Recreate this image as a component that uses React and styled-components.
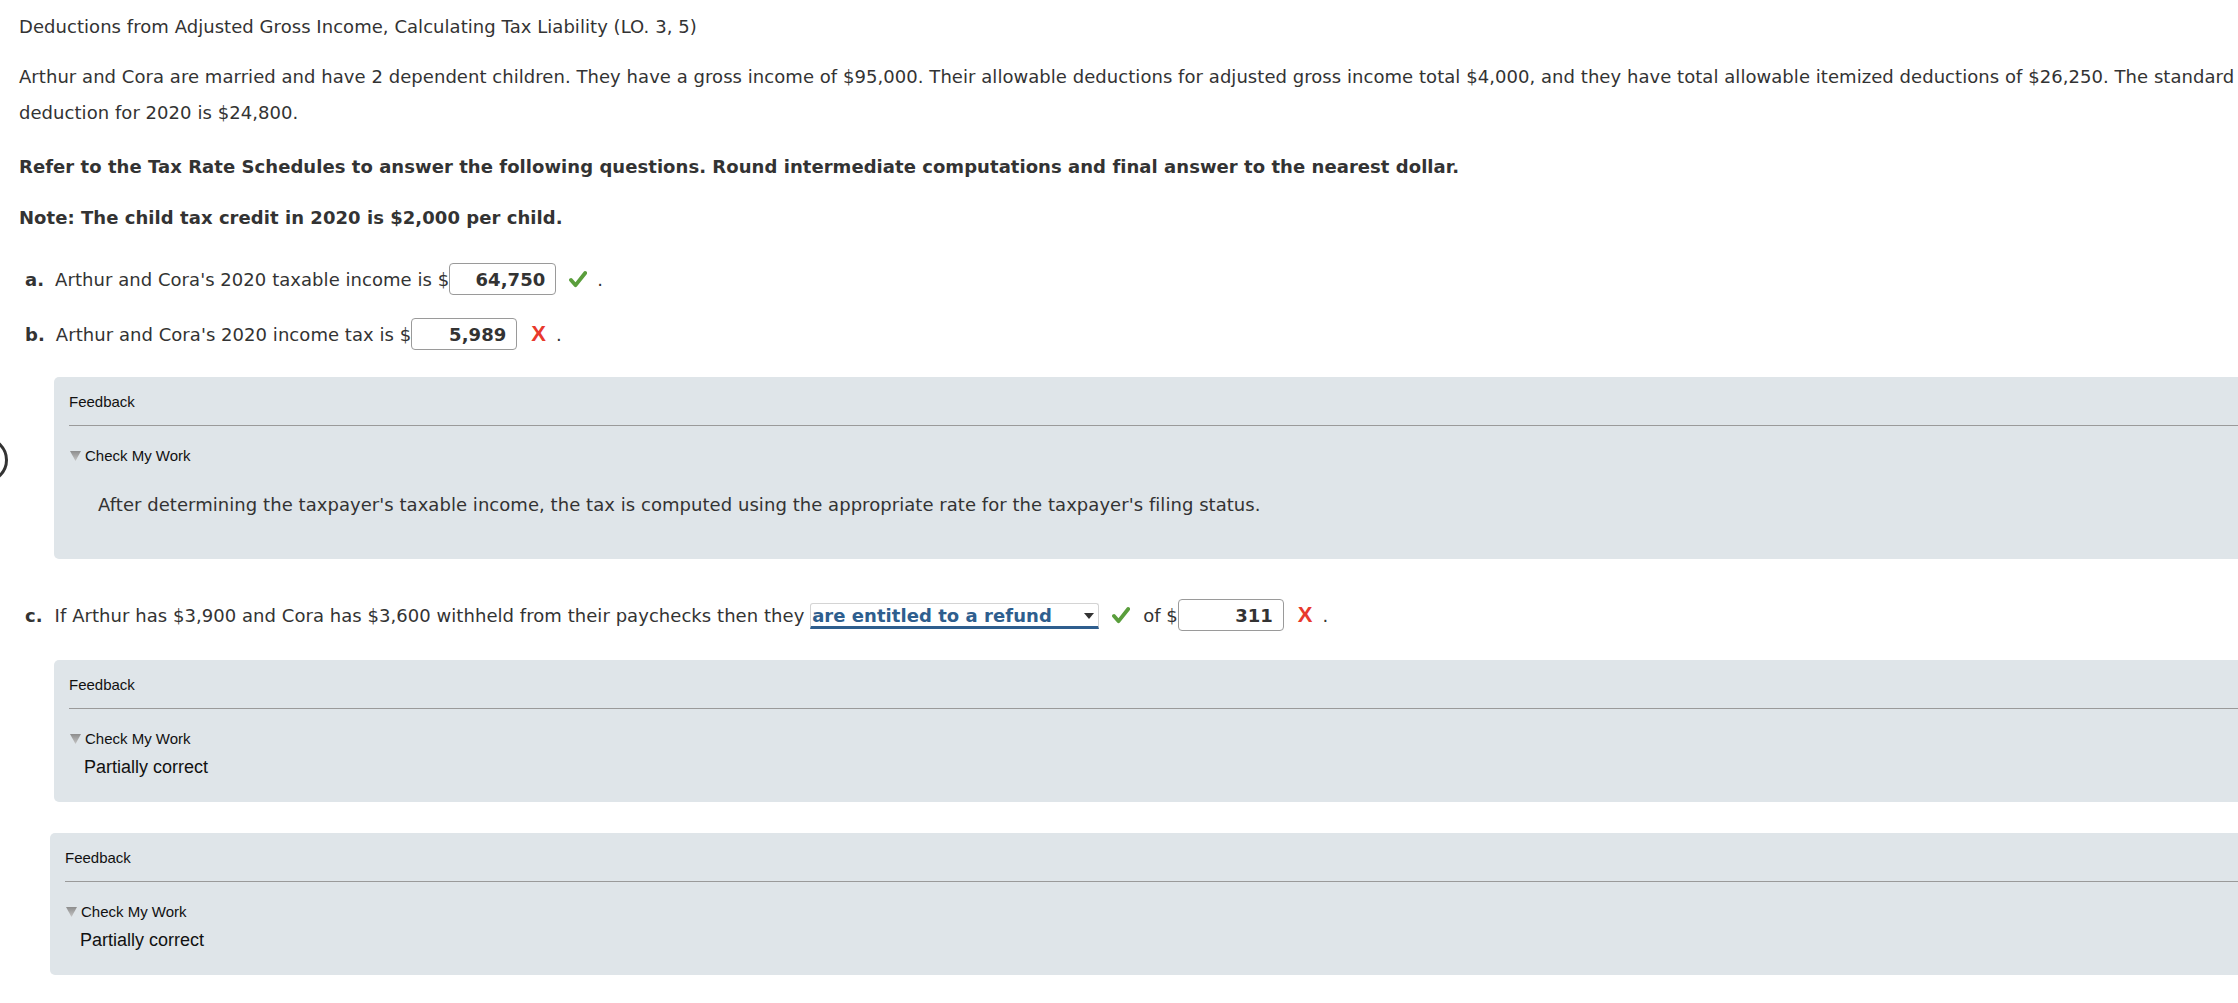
import styled, { createGlobalStyle } from "styled-components";

const GlobalStyle = createGlobalStyle`
  html, body {
    margin: 0;
    padding: 0;
    background: #fff;
    overflow: hidden;
  }
`;

const Check = () => (
  <Mark width="18" height="17" viewBox="0 0 18 17">
    <path
      d="M2 9 L6.6 14.2 L16.2 2"
      fill="none"
      stroke="#5a9e3c"
      strokeWidth="3.8"
      strokeLinecap="round"
      strokeLinejoin="round"
    />
  </Mark>
);

const Cross = () => <CrossMark>X</CrossMark>;

const Triangle = () => (
  <Tri width="11" height="10" viewBox="0 0 11 10">
    <defs>
      <linearGradient id="tg" x1="0" y1="0" x2="0" y2="1">
        <stop offset="0" stopColor="#8d8d8d" />
        <stop offset="1" stopColor="#c4c4c4" />
      </linearGradient>
    </defs>
    <polygon points="0,0 11,0 5.5,10" fill="url(#tg)" />
  </Tri>
);

const Feedback = ({ inset, children }) => (
  <FeedbackBox $inset={inset}>
    <FeedbackTitle>Feedback</FeedbackTitle>
    <Rule />
    <CheckRow>
      <Triangle />
      Check My Work
    </CheckRow>
    {children}
  </FeedbackBox>
);

const App = () => {
  return (
    <>
      <GlobalStyle />
      <Page>
        <StrayCircle />
        <Title>
          Deductions from Adjusted Gross Income, Calculating Tax Liability (LO. 3, 5)
        </Title>
        <Para>
          Arthur and Cora are married and have 2 dependent children. They have a
          gross income of $95,000. Their allowable deductions for adjusted gross
          income total $4,000, and they have total allowable itemized deductions
          of $26,250. The standard deduction for 2020 is $24,800.
        </Para>
        <Strong $top={18}>
          Refer to the Tax Rate Schedules to answer the following questions.
          Round intermediate computations and final answer to the nearest dollar.
        </Strong>
        <Strong $top={15}>Note: The child tax credit in 2020 is $2,000 per child.</Strong>

        <Row $top={27}>
          <Letter>a.</Letter>
          Arthur and Cora's 2020 taxable income is $
          <Answer $w={107}>64,750</Answer>
          <Check />
          <Dot>.</Dot>
        </Row>
        <Row $top={23}>
          <Letter>b.</Letter>
          Arthur and Cora's 2020 income tax is $
          <Answer $w={106}>5,989</Answer>
          <Cross />
          <Dot>.</Dot>
        </Row>

        <Feedback inset={35}>
          <Explain>
            After determining the taxpayer's taxable income, the tax is computed
            using the appropriate rate for the taxpayer's filing status.
          </Explain>
        </Feedback>

        <Row $top={40}>
          <Letter $gap={12}>c.</Letter>
          If Arthur has $3,900 and Cora has $3,600 withheld from their paychecks
          then they&nbsp;
          <Choice>
            are entitled to a refund
            <Caret />
          </Choice>
          <Check />
          <Of>of $</Of>
          <Answer $w={106}>311</Answer>
          <Cross />
          <Dot>.</Dot>
        </Row>

        <Spacer $h={29} />
        <Feedback inset={35}>
          <Partial>Partially correct</Partial>
        </Feedback>
        <Spacer $h={31} />
        <Feedback inset={31}>
          <Partial>Partially correct</Partial>
        </Feedback>
      </Page>
    </>
  );
};

export default App;

const Page = styled.div`
  position: relative;
  width: 2330px;
  padding: 9px 0 40px 19px;
  box-sizing: border-box;
  font-family: "DejaVu Sans", Verdana, sans-serif;
  font-size: 18px;
  letter-spacing: 0.05px;
  color: #333;
`;

const StrayCircle = styled.div`
  position: absolute;
  left: -38px;
  top: 437px;
  width: 40px;
  height: 40px;
  border: 3px solid #333;
  border-radius: 50%;
`;

const Title = styled.div`
  line-height: 36px;
`;

const Para = styled.p`
  margin: 14px 0 0;
  line-height: 36px;
  width: 2225px;
`;

const Strong = styled.p`
  margin: ${(p) => p.$top}px 0 0;
  line-height: 36px;
  font-weight: bold;
`;

const Row = styled.div`
  display: flex;
  align-items: center;
  height: 32px;
  margin-top: ${(p) => p.$top}px;
  padding-left: 6px;
  white-space: pre;
`;

const Letter = styled.span`
  font-weight: bold;
  margin-right: ${(p) => p.$gap || 11}px;
`;

const Answer = styled.span`
  box-sizing: border-box;
  width: ${(p) => p.$w}px;
  height: 32px;
  border: 1px solid #9a9a9a;
  border-radius: 4px;
  background: #fff;
  display: flex;
  align-items: center;
  justify-content: flex-end;
  padding-right: 10px;
  font-weight: bold;
  color: #333;
`;

const Mark = styled.svg`
  margin-left: 13px;
  flex: none;
`;

const CrossMark = styled.span`
  margin-left: 14px;
  font-family: "Liberation Sans", Arial, sans-serif;
  font-weight: bold;
  font-size: 22px;
  color: #e8392c;
`;

const Dot = styled.span`
  margin-left: 10px;
`;

const Choice = styled.span`
  position: relative;
  box-sizing: border-box;
  width: 289px;
  height: 26px;
  margin-top: 2px;
  display: flex;
  align-items: center;
  padding-left: 1px;
  border: 1px solid #d4d4d4;
  border-bottom: 3px solid #2e5e8e;
  border-radius: 3px 3px 0 0;
  font-weight: bold;
  color: #2e5e8e;
  background: #fff;
`;

const Caret = styled.span`
  position: absolute;
  right: 4px;
  top: 9px;
  width: 0;
  height: 0;
  border-left: 5px solid transparent;
  border-right: 5px solid transparent;
  border-top: 6px solid #333;
`;

const Of = styled.span`
  margin-left: 13px;
`;

const Spacer = styled.div`
  height: ${(p) => p.$h}px;
`;

const FeedbackBox = styled.div`
  margin: 27px 0 0 ${(p) => p.$inset}px;
  padding: 16px 0 24px 15px;
  background: #dfe5e9;
  border-radius: 5px;
  font-family: "Liberation Sans", Arial, Helvetica, sans-serif;
  letter-spacing: 0;
  color: #111;

  ${Spacer} + & {
    margin-top: 0;
  }
`;

const FeedbackTitle = styled.div`
  font-size: 15px;
  line-height: 17px;
`;

const Rule = styled.div`
  height: 1px;
  background: #9a9a9a;
  margin-top: 15px;
`;

const CheckRow = styled.div`
  display: flex;
  align-items: center;
  margin-top: 21px;
  font-size: 15px;
  line-height: 17px;
`;

const Tri = styled.svg`
  margin: 0 4px 0 1px;
`;

const Partial = styled.div`
  margin: 10px 0 0 15px;
  font-size: 18px;
  line-height: 21px;
`;

const Explain = styled.p`
  margin: 23px 0 12px 29px;
  font-family: "DejaVu Sans", Verdana, sans-serif;
  font-size: 18px;
  letter-spacing: 0.05px;
  line-height: 36px;
  color: #333;
`;
